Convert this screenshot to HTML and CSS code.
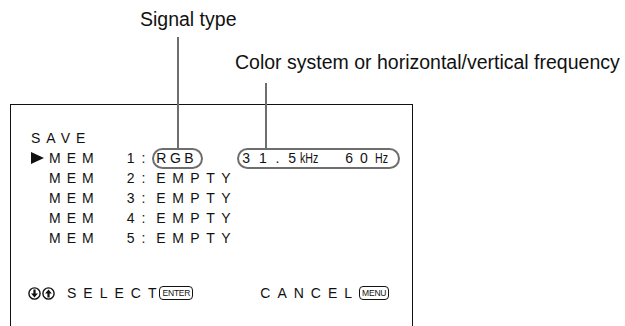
FILE: index.html
```html
<!doctype html>
<html lang="en-US">
<head>
    <meta name="viewport" content="width=device-width, initial-scale=1" charset="utf-8">
    <title>Save memory</title>
    <link rel="stylesheet" href="styles.css">
</head>
<body>
  <div class="page">
    <p class="caption caption-signal">Signal type</p>
    <p class="caption caption-freq">Color system or horizontal/vertical frequency</p>

    <div class="screen">
      <div class="title">SAVE</div>

      <div class="row">
        <span class="mark">
          <svg width="13" height="12" viewBox="0 0 13 12"><polygon points="0,0 13,6 0,12" fill="#111"/></svg>
        </span>
        <span class="key">MEM</span>
        <span class="num">1:</span>
        <span class="val oval oval-signal">RGB</span>
        <span class="oval oval-freq">
          <span class="digits">3 1 . 5</span><span class="unit">kHz</span><span class="digits digits-v">60</span><span class="unit unit-v">Hz</span>
        </span>
      </div>
      <div class="row">
        <span class="mark"></span>
        <span class="key">MEM</span>
        <span class="num">2:</span>
        <span class="val">EMPTY</span>
      </div>
      <div class="row">
        <span class="mark"></span>
        <span class="key">MEM</span>
        <span class="num">3:</span>
        <span class="val">EMPTY</span>
      </div>
      <div class="row">
        <span class="mark"></span>
        <span class="key">MEM</span>
        <span class="num">4:</span>
        <span class="val">EMPTY</span>
      </div>
      <div class="row">
        <span class="mark"></span>
        <span class="key">MEM</span>
        <span class="num">5:</span>
        <span class="val">EMPTY</span>
      </div>

      <div class="footer">
        <span class="keycap">
          <svg width="13" height="13" viewBox="0 0 13 13">
            <circle cx="6.5" cy="6.5" r="5.6" fill="none" stroke="#111" stroke-width="1.4"/>
            <polygon points="5.4,2.6 7.6,2.6 7.6,6.4 9.9,6.4 6.5,10.4 3.1,6.4 5.4,6.4" fill="#111"/>
          </svg>
        </span>
        <span class="keycap">
          <svg width="13" height="13" viewBox="0 0 13 13">
            <circle cx="6.5" cy="6.5" r="5.6" fill="none" stroke="#111" stroke-width="1.4"/>
            <polygon points="5.4,10.4 7.6,10.4 7.6,6.6 9.9,6.6 6.5,2.6 3.1,6.6 5.4,6.6" fill="#111"/>
          </svg>
        </span>
        <span class="cmd">SELECT</span>
        <span class="btn">ENTER</span>
        <span class="cmd cmd-cancel">CANCEL</span>
        <span class="btn btn-menu">MENU</span>
      </div>
    </div>
  </div>
</body>
</html>
```

FILE: styles.css
```css
  :root {
  --font-face: "Liberation Sans", Arial, Helvetica, sans-serif;
  --callout: #6e6e6e;
  }
  body {
  margin: 0;
  background-color: white;
  color: #111;
  font-family: var(--font-face);
  }

  .page {
  width: 625px;
  height: 326px;
  overflow: hidden;
  padding-top: 9px;
  box-sizing: border-box;
  }

  .caption {
  margin: 0;
  font-size: 19.5px;
  line-height: 20px;
  white-space: nowrap;
  }

  .caption-signal {
  padding-left: 140px;
  }

  .caption-freq {
  margin-top: 23px;
  padding-left: 235px;
  }

  /* the monitor menu, cut off by the bottom of the picture */
  .screen {
  margin: 32px 0 0 10px;
  width: 403px;
  height: 260px;
  border: 1px solid #111;
  border-bottom: none;
  padding: 23px 0 0 17px;
  box-sizing: border-box;
  font-size: 14px;
  line-height: 20px;
  }

  .title {
  padding-left: 3px;
  letter-spacing: 6px;
  }

  .row {
  display: flex;
  align-items: center;
  height: 20px;
  padding-left: 3px;
  }

  .mark {
  width: 18px;
  display: flex;
  align-items: center;
  }

  .key {
  letter-spacing: 6px;
  }

  .num {
  margin-left: 27px;
  letter-spacing: 7px;
  }

  .val {
  border: 2px solid transparent;
  padding-left: 2px;
  letter-spacing: 6.5px;
  }

  .oval {
  position: relative;
  border: 2px solid var(--callout);
  border-radius: 11px;
  height: 17px;
  line-height: 17px;
  display: flex;
  align-items: baseline;
  }

  .oval::before {
  content: "";
  position: absolute;
  bottom: 100%;
  width: 2px;
  background-color: var(--callout);
  }

  .oval-signal {
  padding: 0 4px 0 2px;
  letter-spacing: 3.5px;
  }

  .oval-signal::before {
  left: calc(50% - 1px);
  height: 113px;
  }

  .oval-freq {
  margin-left: 34px;
  padding: 0 8px 0 3px;
  }

  .oval-freq::before {
  left: 26px;
  height: 67px;
  }

  .digits {
  letter-spacing: 2.5px;
  }

  .digits-v {
  margin-left: 26px;
  letter-spacing: 7px;
  }

  /* kHz / Hz are set in a narrow face on the monitor */
  .unit {
  display: inline-block;
  width: 19px;
  margin-left: 1.5px;
  font-size: 14px;
  transform: scaleX(0.76);
  transform-origin: left;
  }

  .unit-v {
  width: 15px;
  margin-left: 0;
  }

  .footer {
  display: flex;
  align-items: center;
  height: 20px;
  margin-top: 35px;
  }

  .keycap {
  display: flex;
  margin-right: 1px;
  }

  .cmd {
  margin-left: 11px;
  letter-spacing: 7px;
  }

  .cmd-cancel {
  margin-left: 67px;
  }

  .btn {
  border: 1px solid #111;
  border-radius: 4px;
  font-size: 8.5px;
  line-height: 12px;
  letter-spacing: -0.2px;
  padding: 0 2px;
  margin-left: -4px;
  }

  .btn-menu {
  margin-left: 0;
  }
```
